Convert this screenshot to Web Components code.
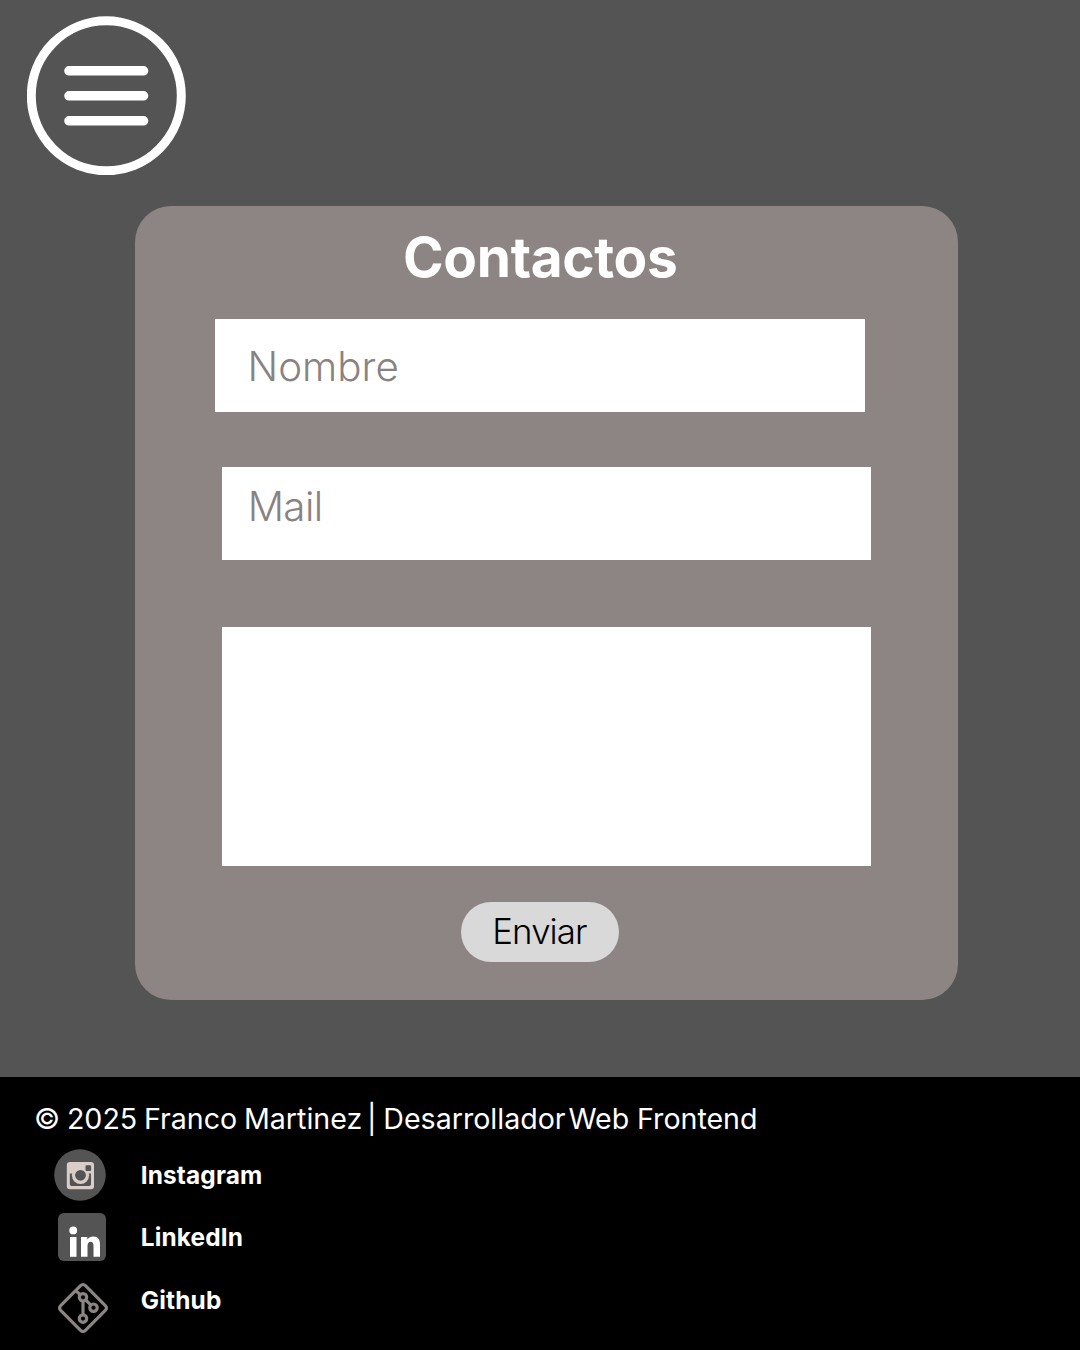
<!DOCTYPE html>
<html lang="es">
<head>
<meta charset="utf-8">
<title>Contactos</title>
<style>
  html, body { margin: 0; padding: 0; }
  body { background: #545454; font-family: Inter, "Liberation Sans", sans-serif; }
</style>
</head>
<body>
<contact-page></contact-page>
<script>
/* A line of text tracked so that its ink spans the width given in "span". */
class TrackedText extends HTMLElement {
  connectedCallback() {
    const size = +this.getAttribute('size');
    const weight = this.getAttribute('weight') || 400;
    const span = +this.getAttribute('span');
    const gap = this.getAttribute('gap') || 0;
    const optical = this.hasAttribute('optical') ? 'auto' : 'none';
    const text = this.textContent;
    const ctx = document.createElement('canvas').getContext('2d');
    ctx.font = `${weight} ${size}px Inter, "Liberation Sans", sans-serif`;
    const m = ctx.measureText(text);
    const left = -m.actualBoundingBoxLeft;
    const right = m.width - m.actualBoundingBoxRight;
    const root = this.attachShadow({ mode: 'open' });
    root.innerHTML = `<style>
      :host { display: block; width: ${span}px; white-space: pre; font-size: ${size}px; font-weight: ${weight};
        line-height: 1.2; word-spacing: ${gap}px; font-optical-sizing: ${optical}; }
      .line { display: inline-block; margin-left: ${(-left).toFixed(2)}px; }
    </style><span class="line"><slot></slot></span>`;
    const line = root.querySelector('.line');
    const natural = line.getBoundingClientRect().width - left - right;
    line.style.letterSpacing = ((span - natural) / (text.length - 1)).toFixed(3) + 'px';
  }
}

class MenuButton extends HTMLElement {
  constructor() {
    super();
    this.attachShadow({ mode: 'open' }).innerHTML = `<style>
      :host { display: block; width: 159px; height: 159px; }
      svg { display: block; }
    </style>
    <svg width="159" height="159" viewBox="0 0 159 159" fill="none" stroke="#fff">
      <circle cx="79.3" cy="79.8" r="75" stroke-width="9"/>
      <path d="M42 54.8H116.5M42 79.8H116.5M42 104.8H116.5" stroke-width="9.6" stroke-linecap="round"/>
    </svg>`;
  }
}

class FormField extends HTMLElement {
  constructor() {
    super();
    this.attachShadow({ mode: 'open' }).innerHTML = `<style>
      :host { display: flex; align-items: center; box-sizing: border-box; width: 649.5px; height: 93.5px;
        background: #fff; color: #8a8281; }
      :host([multiline]) { height: 239px; }
    </style><slot></slot>`;
  }
}

class SendButton extends HTMLElement {
  constructor() {
    super();
    this.attachShadow({ mode: 'open' }).innerHTML = `<style>
      :host { display: flex; align-items: center; box-sizing: border-box; width: 158.5px; height: 60.5px;
        padding-left: 34.6px; border-radius: 30px; background: #d9d9d9; color: #000; }
    </style><slot></slot>`;
  }
}

class ContactCard extends HTMLElement {
  constructor() {
    super();
    this.attachShadow({ mode: 'open' }).innerHTML = `<style>
      :host { display: flex; flex-direction: column; align-items: flex-start; box-sizing: border-box;
        width: 823px; height: 794px; border-radius: 36px; background: #8d8584; }
      .title { display: flex; align-items: center; box-sizing: border-box; height: 100px; padding-top: 2px; color: #fff; margin-left: 270px; }
      .name { margin: 12.5px 0 0 80px; padding: 4px 0 0 35.6px; }
      .mail { margin: 54.5px 0 0 86.7px; padding: 0 0 11.5px 29px; }
      .message { margin: 66.5px 0 0 86.7px; }
      send-button { margin: 36px 0 0 325.7px; }
    </style>
    <div class="title"><tracked-text size="55" weight="730" span="271">Contactos</tracked-text></div>
    <form-field class="name"><tracked-text size="40.3" weight="330" span="146.8">Nombre</tracked-text></form-field>
    <form-field class="mail"><tracked-text size="40.3" weight="330" span="70">Mail</tracked-text></form-field>
    <form-field class="message" multiline></form-field>
    <send-button><tracked-text size="34.8" weight="340" span="91.8" optical>Enviar</tracked-text></send-button>`;
  }
}

class SocialIcon extends HTMLElement {
  connectedCallback() {
    const art = {
      instagram: `<circle cx="26" cy="26" r="25.8" fill="#545454"/>
        <rect x="12.8" y="13" width="27.2" height="27.2" rx="3" fill="#d9cdc8"/>
        <path d="M15.8 24.5H37V35.3a1.8 1.8 0 0 1-1.8 1.8H17.6a1.8 1.8 0 0 1-1.8-1.8z" fill="#545454"/>
        <circle cx="26.5" cy="26.3" r="8.6" fill="#d9cdc8"/>
        <circle cx="26.5" cy="26.3" r="5.4" fill="#545454"/>
        <rect x="31.5" y="16.3" width="5.6" height="5.6" rx=".8" fill="#545454"/>`,
      linkedin: `<rect x="4" y="2" width="48" height="48" rx="6" fill="#545454"/>
        <g fill="#fff"><circle cx="19.2" cy="19.4" r="3.9"/><rect x="16" y="26" width="6.5" height="19.8"/>
        <path d="M27 26h6.3v2.6c1.3-2 3.4-3.1 6-3.1 4.9 0 6.7 3.2 6.7 8.3v12h-6.5V35.2c0-2.7-.7-4.4-2.7-4.4-2.3 0-3.3 1.8-3.3 4.4v10.6h-6.5z"/></g>`,
      github: `<g fill="none" stroke="#8d8584" stroke-width="3.2">
        <path d="M26.6 3.7Q29 1.3 31.4 3.7L51.3 23.6Q53.7 26 51.3 28.4L31.4 48.3Q29 50.7 26.6 48.3L6.7 28.4Q4.3 26 6.7 23.6z"/>
        <circle cx="29" cy="15.3" r="3.7"/><circle cx="39.5" cy="25.7" r="3.7"/><circle cx="29" cy="36.6" r="3.7"/>
        <path d="M29 19v14M31.6 17.9l5.3 5.2M21.6 8.6l4.8 4.2"/></g>`
    }[this.getAttribute('name')];
    this.attachShadow({ mode: 'open' }).innerHTML = `<style>
      :host { display: block; width: 56px; height: 52px; } svg { display: block; }
    </style><svg width="56" height="52" viewBox="0 0 56 52">${art}</svg>`;
  }
}

class SocialLink extends HTMLElement {
  connectedCallback() {
    this.attachShadow({ mode: 'open' }).innerHTML = `<style>
      :host { display: flex; align-items: flex-start; height: 52px; }
      .label { display: flex; align-items: center; box-sizing: border-box; height: 52px; padding-top: 2px; margin-left: 31.7px; }
    </style><social-icon name="${this.getAttribute('icon')}"></social-icon><div class="label"><slot></slot></div>`;
  }
}

class SiteFooter extends HTMLElement {
  constructor() {
    super();
    this.attachShadow({ mode: 'open' }).innerHTML = `<style>
      :host { display: block; box-sizing: border-box; height: 273px; background: #000; color: #fff; padding-left: 36px; }
      .copy { display: flex; align-items: center; height: 72px; padding-top: 12px; box-sizing: border-box; }
      .copy .bar { margin-left: -2px; }
      .copy .role { margin-left: -4px; }
      .copy .end { margin-left: 1px; }
      .links { display: flex; flex-direction: column; padding-left: 18px; }
      .in { margin-top: 10px; }
      .gh { margin-top: 19px; }
      .gh tracked-text { margin-top: -17px; }
    </style>
    <div class="copy"><tracked-text size="28.6" span="720" gap="-1.2">© 2025 Franco Martinez <span class="bar">| Desarrollador <span class="role">Web <span class="end">Frontend</span></span></span></tracked-text></div>
    <div class="links">
      <social-link icon="instagram"><tracked-text size="24.4" weight="700" span="119.3">Instagram</tracked-text></social-link>
      <social-link class="in" icon="linkedin"><tracked-text size="24.4" weight="700" span="100">LinkedIn</tracked-text></social-link>
      <social-link class="gh" icon="github"><tracked-text size="24.4" weight="700" span="79.3">Github</tracked-text></social-link>
    </div>`;
  }
}

class ContactPage extends HTMLElement {
  constructor() {
    super();
    this.attachShadow({ mode: 'open' }).innerHTML = `<style>
      :host { display: flex; flex-direction: column; width: 1080px; height: 1350px; overflow: hidden; background: #545454; }
      menu-button { margin: 16px 0 0 27px; }
      contact-card { margin: 31px 0 77px 135px; }
    </style>
    <menu-button></menu-button><contact-card></contact-card><site-footer></site-footer>`;
  }
}

/* Containers come first so that text lines are measured in their final place. */
customElements.define('contact-page', ContactPage);
customElements.define('contact-card', ContactCard);
customElements.define('site-footer', SiteFooter);
customElements.define('menu-button', MenuButton);
customElements.define('form-field', FormField);
customElements.define('send-button', SendButton);
customElements.define('social-icon', SocialIcon);
customElements.define('social-link', SocialLink);
customElements.define('tracked-text', TrackedText);
</script>
</body>
</html>
